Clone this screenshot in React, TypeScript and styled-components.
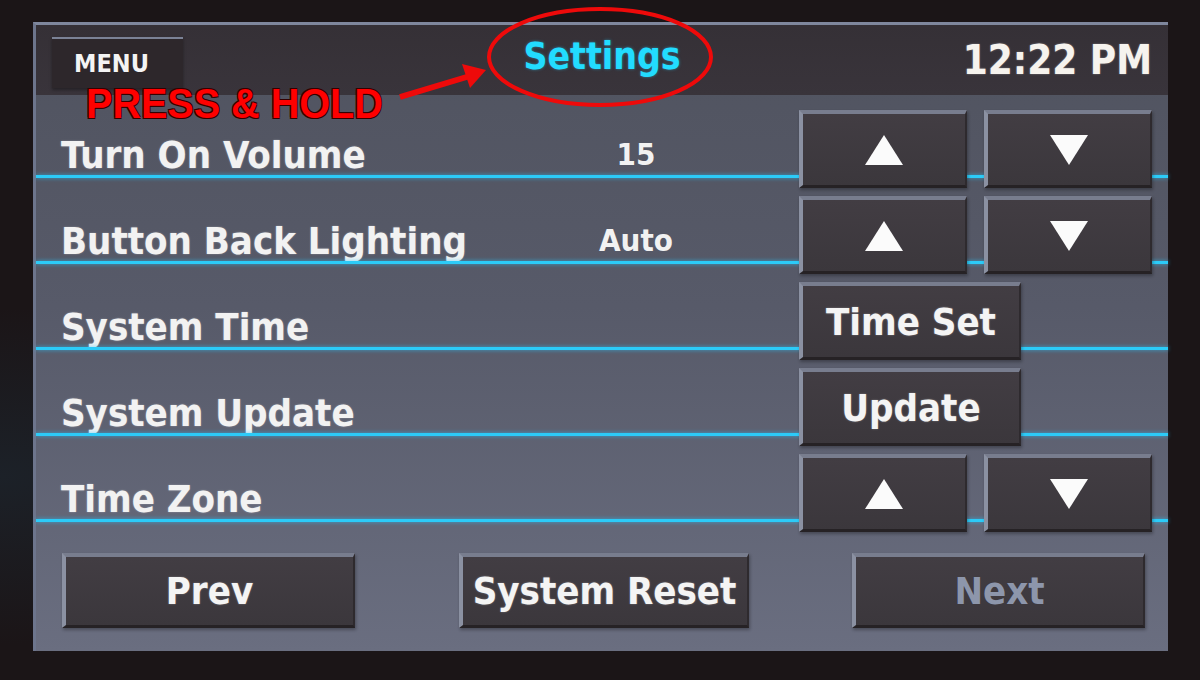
import React from 'react';
import styled, { createGlobalStyle } from 'styled-components';

const GlobalStyle = createGlobalStyle`
  html, body {
    margin: 0;
    padding: 0;
    background: #1b1517;
  }
  body {
    font-family: "DejaVu Sans Condensed", "DejaVu Sans", sans-serif;
  }
`;

const Bezel = styled.div`
  position: relative;
  width: 1200px;
  height: 680px;
  box-sizing: border-box;
  padding: 22px 32px 32px 33px;
  background: radial-gradient(ellipse at 0% 70%, #1c2128 0%, #1b1517 25%);
  overflow: hidden;
`;

const Screen = styled.div`
  height: 100%;
  display: flex;
  flex-direction: column;
  border-top: 3px solid #7f879d;
  border-left: 3px solid #6d758c;
  background: linear-gradient(180deg, #50535f 0%, #575a69 45%, #6a6e80 100%);
`;

const Header = styled.div`
  height: 70px;
  flex: none;
  display: grid;
  grid-template-columns: 1fr auto 1fr;
  align-items: center;
  padding: 0 16px;
  background: linear-gradient(180deg, #353036 0%, #39343b 100%);
`;

const MenuButton = styled.div`
  align-self: start;
  justify-self: start;
  margin-top: 12px;
  width: 131px;
  height: 51px;
  box-sizing: border-box;
  display: flex;
  align-items: center;
  justify-content: center;
  background: #2d272b;
  border-top: 2px solid #7b8296;
  box-shadow: 0 2px 3px rgba(0, 0, 0, 0.35);
  color: #f4f4f4;
  font-size: 25px;
  font-weight: 700;
  padding-right: 12px;
`;

const Title = styled.div`
  color: #22dcff;
  font-size: 37px;
  font-weight: 700;
  margin-bottom: 8px;
  text-shadow: 0 0 3px rgba(40, 210, 255, 0.5);
`;

const Clock = styled.div`
  justify-self: end;
  color: #f6f3ee;
  font-size: 40px;
  font-weight: 700;
  text-shadow: 0 0 2px rgba(255, 255, 255, 0.4);
`;

const Rows = styled.div`
  padding-top: 11px;
`;

const Row = styled.div`
  position: relative;
  display: grid;
  grid-template-columns: 500px 150px auto;
  align-items: center;
  height: 86px;
  padding-left: 25px;
  &::after {
    content: '';
    position: absolute;
    left: 0;
    right: 0;
    top: 69px;
    height: 3px;
    background: #2ccbf8;
    box-shadow: 0 0 4px rgba(40, 200, 255, 0.7);
  }
`;

const Label = styled.div`
  margin-top: 12px;
  color: #f2f2f2;
  font-size: 38px;
  font-weight: 700;
  white-space: nowrap;
  text-shadow: 0 0 2px rgba(255, 255, 255, 0.35);
`;

const Value = styled.div`
  margin-top: 10px;
  text-align: center;
  color: #f2f2f2;
  font-size: 31px;
  font-weight: 700;
`;

const Controls = styled.div`
  position: relative;
  z-index: 1;
  display: flex;
  gap: 17px;
  margin-left: 88px;
`;

const Key = styled.div<{ $w: number; $h?: number; $dim?: boolean }>`
  width: ${(p) => p.$w}px;
  height: ${(p) => p.$h ?? 78}px;
  box-sizing: border-box;
  display: flex;
  align-items: center;
  justify-content: center;
  background: linear-gradient(180deg, #423d43 0%, #3b373c 100%);
  border-top: 4px solid #787d8e;
  border-left: 4px solid #8b91a2;
  border-right: 2px solid #2e2a2e;
  border-bottom: 3px solid #262225;
  box-shadow: 1px 2px 3px rgba(0, 0, 0, 0.3);
  color: ${(p) => (p.$dim ? '#8d96ab' : '#f4f4f4')};
  font-size: 38px;
  font-weight: 700;
  white-space: nowrap;
  text-shadow: ${(p) => (p.$dim ? 'none' : '0 0 2px rgba(255,255,255,0.35)')};
`;

const Footer = styled.div`
  flex: 1;
  display: flex;
  justify-content: space-between;
  align-items: flex-start;
  padding: 17px 23px 0 26px;
`;

const Ring = styled.svg`
  position: absolute;
  left: 486px;
  top: 5px;
`;

const Pointer = styled.svg`
  position: absolute;
  left: 392px;
  top: 60px;
`;

const Note = styled.div`
  position: absolute;
  left: 86px;
  top: 79px;
  color: #ff0000;
  font-family: "Liberation Sans", Arial, sans-serif;
  font-size: 43px;
  font-weight: 900;
  transform: scaleX(0.92);
  transform-origin: left center;
  text-shadow: -1px -1px 0 #300, 1px -1px 0 #300, -1px 1px 0 #300, 1px 1px 0 #300;
`;

const Arrow = ({ down }: { down?: boolean }) => (
  <svg width="38" height="30" viewBox="0 0 38 30">
    <polygon points={down ? '0,0 38,0 19,30' : '19,0 38,30 0,30'} fill="#fbfbfb" />
  </svg>
);

const Stepper = () => (
  <Controls>
    <Key $w={168}>
      <Arrow />
    </Key>
    <Key $w={168}>
      <Arrow down />
    </Key>
  </Controls>
);

const settings = [
  { label: 'Turn On Volume', value: '15', control: <Stepper /> },
  { label: 'Button Back Lighting', value: 'Auto', control: <Stepper /> },
  {
    label: 'System Time',
    value: '',
    control: (
      <Controls>
        <Key $w={222}>Time Set</Key>
      </Controls>
    ),
  },
  {
    label: 'System Update',
    value: '',
    control: (
      <Controls>
        <Key $w={222}>Update</Key>
      </Controls>
    ),
  },
  { label: 'Time Zone', value: '', control: <Stepper /> },
];

export default function App() {
  return (
    <>
      <GlobalStyle />
      <Bezel>
        <Screen>
          <Header>
            <MenuButton>MENU</MenuButton>
            <Title>Settings</Title>
            <Clock>12:22 PM</Clock>
          </Header>
          <Rows>
            {settings.map((s) => (
              <Row key={s.label}>
                <Label>{s.label}</Label>
                <Value>{s.value}</Value>
                {s.control}
              </Row>
            ))}
          </Rows>
          <Footer>
            <Key $w={293} $h={75}>Prev</Key>
            <Key $w={290} $h={75}>System Reset</Key>
            <Key $w={293} $h={75} $dim>Next</Key>
          </Footer>
        </Screen>
        <Ring width="228" height="104" viewBox="0 0 228 104">
          <ellipse cx="114" cy="52" rx="111" ry="48" fill="none" stroke="#ee0a0a" strokeWidth="4" />
        </Ring>
        <Pointer width="100" height="50" viewBox="0 0 100 50">
          <line x1="8" y1="37" x2="78" y2="16" stroke="#ee0a0a" strokeWidth="6" />
          <polygon points="94,10 70,4 78,28" fill="#ee0a0a" />
        </Pointer>
        <Note>PRESS &amp; HOLD</Note>
      </Bezel>
    </>
  );
}
